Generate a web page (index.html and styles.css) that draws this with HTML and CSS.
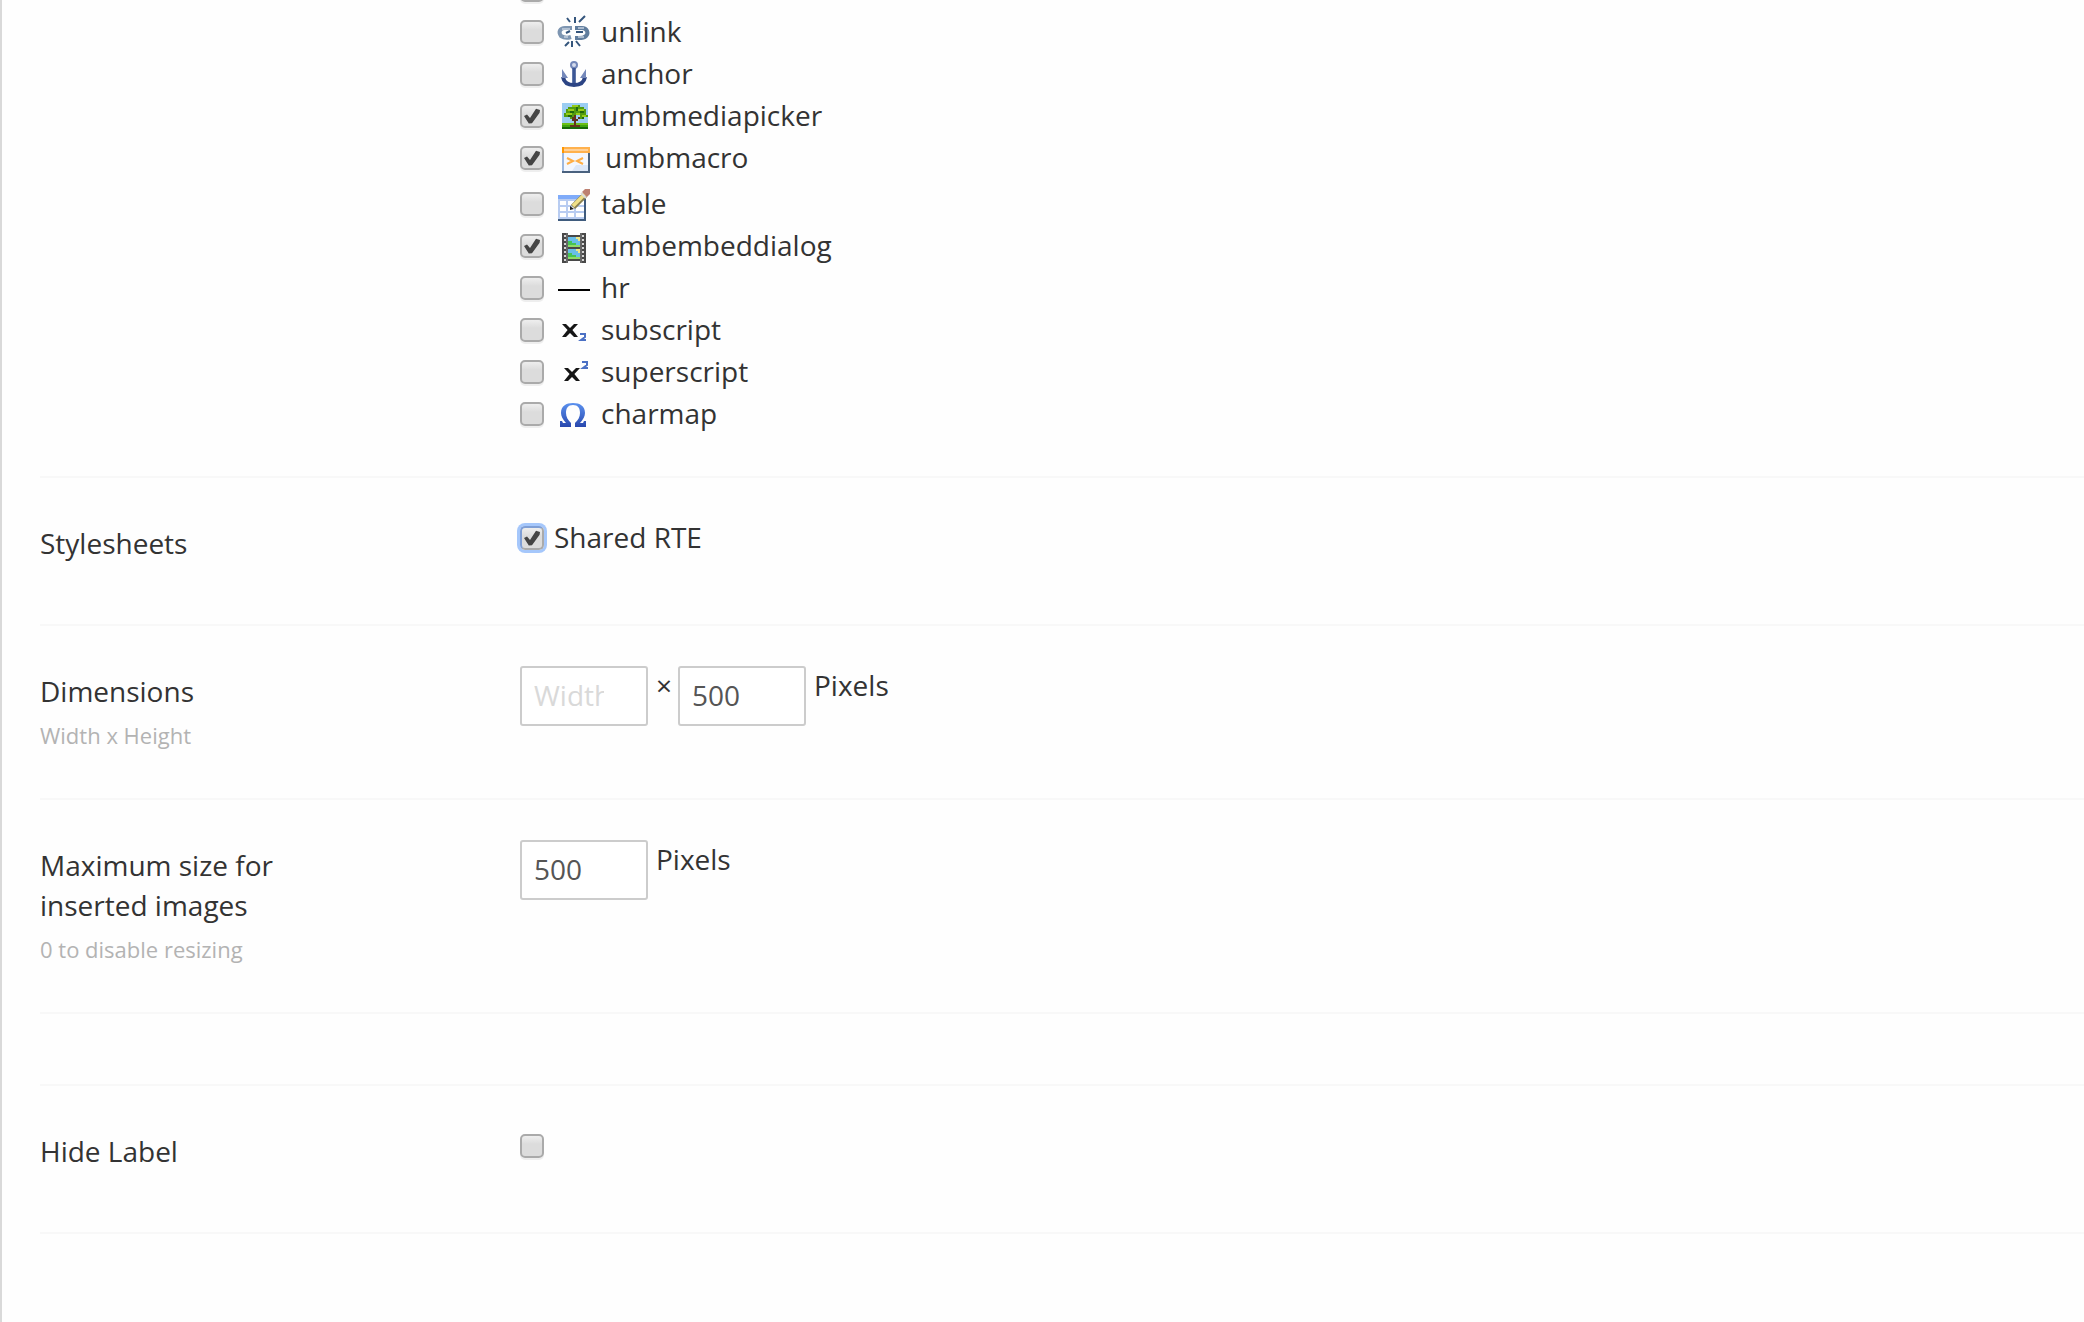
FILE: index.html
```html
<!DOCTYPE html>
<html lang="en">
<head>
<meta charset="utf-8">
<meta name="viewport" content="width=device-width, initial-scale=1">
<title>Rich text editor settings</title>
<link rel="stylesheet" href="styles.css">
</head>
<body>
<main class="panel">
<form>
  <section class="group toolbar-group">
    <div class="label-col"></div>
    <ul class="commands">
      <li><input type="checkbox" id="c-link" aria-label="link"></li>
      <li><input type="checkbox" id="c-unlink"><label for="c-unlink">
        <svg class="icon" viewBox="0 0 16 16" fill="none">
          <path d="M4.500 1.500l1.500 2M8.500 1v3M13.500.5L10.500 3.500M3.500 15.500l2-2M7 13v3M9 13l2 2.500" stroke="#34557c"/>
          <path d="M7 6.500H3.500C1 6.500 0 8.500 1.500 10.500 3 11.500 5 11.500 6.500 11" stroke="#7d95b1" stroke-width="2"/>
          <path d="M8.500 6.500H12c2.500 0 3.500 2.500 2 4-1.500 1.500-3.500 1-5.500 1" stroke="#607d9d" stroke-width="2"/>
          <path d="M2 7h4M10 6.500h3M3 11h2M10 11h3" stroke="#c3d0de" stroke-width=".8"/>
          <path d="M4 9l2-1M9 8.500h3.500" stroke="#34557c"/>
        </svg>unlink</label></li>
      <li><input type="checkbox" id="c-anchor"><label for="c-anchor">
        <svg class="icon" viewBox="0 0 16 16" fill="none">
          <circle cx="8" cy="4" r="1.500" stroke="#7387b8" fill="#d5dced"/>
          <path d="M8 5.500V14" stroke="#3c5795" stroke-width="1.800"/>
          <path d="M2.500 10C3 13 5 14 8 14s5-1 5.500-4" stroke="#2c4484" stroke-width="2"/>
          <path d="M2 6l3 4.500H2zM14 6l-3 4.500h3z" fill="#7488ba"/>
        </svg>anchor</label></li>
      <li><input type="checkbox" id="c-media" checked><label for="c-media">
        <svg class="icon" viewBox="0 0 16 16" shape-rendering="crispEdges">
          <path d="M2 2h13v10H2z" fill="#9bcdf2"/>
          <path d="M2 12h13v3H2z" fill="#3fa510"/><path d="M2 12h13v1H2zM3 14h11v0H3z" fill="#6cc018"/><path d="M2 14h13v1H2z" fill="#176a09"/>
          <path d="M5 4h2V3h4v1h2v1h1v3h1v1h-2v1h-2V8H9v1H8v1H6V9H3V7h1V5h1z" fill="#519c10"/>
          <path d="M7 3h3v1H7zM5 5h3v1H5zM10 5h3v1h-3zM4 7h3v1H4zM9 7h2v1H9zM12 8h2v1h-2z" fill="#97cd19"/>
          <path d="M9 4h1v2H9zM6 6h2v1H6zM11 6h2v1h-2zM5 8h2v1H5zM12 9h1v1h-1z" fill="#20680d"/>
          <path d="M7 9h1v1H7zM8 8h1v2h1V9h1v1h-1v1H9v2h2v1H6v-1h2v-2H7v-1h1z" fill="#65331b"/>
        </svg>umbmediapicker</label></li>
      <li class="tall"><input type="checkbox" id="c-macro" checked><label for="c-macro">
        <svg class="icon icon-wide" viewBox="0 0 18 16">
          <path d="M2 3h14v13H2z" fill="#49617e"/><path d="M2 6h1v9H2z" fill="#9db8df"/>
          <path d="M3 6h12v9H3z" fill="#f3f7ff"/><path d="M9 12h6v3H7z" fill="#dce7f8"/>
          <path d="M2 3h14v3H2z" fill="#ffb14d"/><path d="M3 4h12v1H3z" fill="#ffd097"/><path d="M2 3h1v3H2z" fill="#ff9700"/>
          <path d="M4.500 8.500L7.500 10l-3 1.500M12.500 8.500L9.500 10l3 1.500" fill="none" stroke="#ffad43"/>
        </svg>umbmacro</label></li>
      <li><input type="checkbox" id="c-table"><label for="c-table">
        <svg class="icon" viewBox="0 0 16 16">
          <path d="M0 4h14v13H0z" fill="#3f5b7d"/><path d="M0 4h13v12H0z" fill="#b8ccf1"/>
          <path d="M0 4h13v2H0z" fill="#7fabf9"/>
          <path d="M1 7h3v2H1zM5 7h3v2H5zM9 7h4v2H9zM1 10h3v2H1zM5 10h3v2H5zM9 10h4v2H9zM1 13h3v2H1zM5 13h3v2H5zM9 13h4v2H9z" fill="#fff"/>
          <path d="M7.500 10L13.500 4" stroke="#8b8050" stroke-width="3"/>
          <path d="M7.500 9.500L13.500 3.500" stroke="#f0e088" stroke-width="1.800"/>
          <path d="M12 2.500l1.500-1.500H16v2.500L14.500 5z" fill="#bd8172"/><path d="M11.500 3l2.500 2.500" stroke="#ddd"/>
          <path d="M6 9.500l2 1.500-2 .5z" fill="#222"/>
        </svg>table</label></li>
      <li><input type="checkbox" id="c-embed" checked><label for="c-embed">
        <svg class="icon" viewBox="0 0 16 16" shape-rendering="crispEdges">
          <path d="M2 2h12v15H2z" fill="#484848"/><path d="M5 4h6v5H5zM5 10h6v5H5z" fill="#68bee9"/>
          <path d="M5 6h2v1h2v1h2v1H5zM5 12h2v1h2v1h2v1H5z" fill="#45c455"/><path d="M5 8h6v1H5zM5 14h6v1H5z" fill="#8fdc66"/>
          <path d="M9 4h2v2h-1V5H9zM9 10h2v2h-1v-1H9z" fill="#ede789"/>
          <path d="M3 3h1v1H3zM3 5h1v1H3zM3 7h1v1H3zM3 9h1v1H3zM3 11h1v1H3zM3 13h1v1H3zM3 15h1v1H3zM12 3h1v1h-1zM12 5h1v1h-1zM12 7h1v1h-1zM12 9h1v1h-1zM12 11h1v1h-1zM12 13h1v1h-1zM12 15h1v1h-1z" fill="#d5d5d5"/>
          <path d="M4 2h1v15H4zM11 2h1v15h-1z" fill="#666"/><path d="M5 2h6v1H5zM5 16h6v1H5z" fill="#fefefe"/>
        </svg>umbembeddialog</label></li>
      <li><input type="checkbox" id="c-hr"><label for="c-hr">
        <svg class="icon" viewBox="0 0 16 16"><path d="M0 9h16v1H0z"/></svg>hr</label></li>
      <li><input type="checkbox" id="c-sub"><label for="c-sub">
        <svg class="icon" viewBox="0 0 16 16">
          <path d="M2 5.500h2L6 7.500l2-2h2L7.200 8.500 10 12H8L6 10l-2 2H2l2.800-3.500z" fill="#161616"/>
          <path d="M11 10.500h2.500V12l-2 1.500H14" fill="none" stroke="#4b70c4"/>
        </svg>subscript</label></li>
      <li><input type="checkbox" id="c-sup"><label for="c-sup">
        <svg class="icon" viewBox="0 0 16 16">
          <path d="M3 6.500h2L7 8.500l2-2h2L8.200 9.500 11 13H9l-2-2-2 2H3l2.800-3.500z" fill="#161616"/>
          <path d="M12 3.500h2.500V5l-2 1.500H15" fill="none" stroke="#4b70c4"/>
        </svg>superscript</label></li>
      <li><input type="checkbox" id="c-char"><label for="c-char">
        <svg class="icon" viewBox="0 0 16 16">
          <defs><linearGradient id="omega" x1="0" y1="0" x2="0" y2="1"><stop stop-color="#5b91ef"/><stop offset="1" stop-color="#2948ae"/></linearGradient></defs>
          <path d="M1 12h1l.5 1H4C2.500 11.500 1.500 9.500 1.500 8 1.500 4.500 4 3 7.500 3s6 1.500 6 5c0 1.500-1 3.500-2.500 5h1.500l.5-1h1v3H8.500v-2c1.500-1.500 2.500-3 2.500-5 0-2.500-1-4-3.500-4S4 5.500 4 8c0 2 1 3.500 2.500 5v2H1z" fill="url(#omega)"/>
        </svg>charmap</label></li>
    </ul>
  </section>

  <section class="group">
    <div class="label-col"><h2 class="label">Stylesheets</h2></div>
    <div class="controls">
      <span class="check"><input type="checkbox" id="shared" class="focused" checked><label for="shared">Shared RTE</label></span>
    </div>
  </section>

  <section class="group">
    <div class="label-col"><h2 class="label">Dimensions</h2><p class="hint">Width x Height</p></div>
    <div class="controls">
      <input class="size" type="text" placeholder="Width" aria-label="Width">
      <span class="times">×</span>
      <input class="size" type="text" value="500" aria-label="Height">
      <span>Pixels</span>
    </div>
  </section>

  <section class="group">
    <div class="label-col"><label class="label" for="max">Maximum size for inserted images</label><p class="hint">0 to disable resizing</p></div>
    <div class="controls">
      <input class="size" type="text" value="500" id="max">
      <span>Pixels</span>
    </div>
  </section>

  <div class="spacer"></div>

  <section class="group">
    <div class="label-col"><label class="label" for="hide">Hide Label</label></div>
    <div class="controls"><span class="check"><input type="checkbox" id="hide"></span></div>
  </section>
</form>
</main>
</body>
</html>
```
FILE: styles.css
```css
* { box-sizing: border-box; }

body {
  margin: 0;
  background: #fefefe;
  color: #333;
  font: 28px/40px "Open Sans", sans-serif;
}

.panel {
  min-height: 100vh;
  padding-left: 38px;
  border-left: 2px solid #d9d9d9;
  overflow: hidden;
}

.group {
  display: flex;
  padding-top: 40px;
  border-bottom: 2px solid #f8f8f8;
}

.label-col {
  flex: 0 0 480px;
  padding: 5px 220px 49px 0;
}

.label {
  display: block;
  margin: 0 0 12px;
  font-size: 28px;
  font-weight: 400;
}

.hint {
  margin: 0 0 2px;
  color: #b3b3b3;
  font-size: 22px;
  line-height: 24px;
  white-space: nowrap;
}

.controls {
  display: flex;
  align-items: flex-start;
  gap: 8px;
  line-height: 38px;
}

.times { margin-right: -2px; }

.check {
  display: flex;
  align-items: center;
  gap: 10px;
  height: 40px;
}

.check label { padding-bottom: 2px; }

/* Toolbar commands */
.toolbar-group {
  margin-top: -32px;
  padding: 0 0 42px;
}

.toolbar-group .label-col { padding: 0; }

.commands {
  margin: 0;
  padding: 0;
  list-style: none;
  line-height: 42px;
}

.commands li {
  display: flex;
  align-items: center;
  gap: 14px;
  height: 42px;
}

.commands .tall {
  height: 46px;
  padding-bottom: 4px;
}

.commands label {
  display: flex;
  align-items: center;
  gap: 11px;
}

.commands input[type="checkbox"] { margin-top: 2px; }

.icon {
  width: 32px;
  height: 32px;
  overflow: visible;
}

.icon-wide { width: 36px; }

/* Form controls */
input[type="checkbox"] {
  appearance: none;
  width: 24px;
  height: 24px;
  margin: 0;
  border: 2px solid #aaa;
  border-radius: 5px;
  background: linear-gradient(#eee, #dcdcdc 40%);
  box-shadow: 0 2px 0 #eee;
}

input[type="checkbox"]:checked::before {
  content: "";
  display: block;
  width: 20px;
  height: 20px;
  background: #444;
  clip-path: polygon(10% 50%, 25% 42%, 40% 60%, 70% 14%, 90% 20%, 88% 34%, 50% 86%, 34% 88%);
}

input[type="checkbox"].focused {
  border-color: #7f9fd6 #aaa #aaa #7f9fd6;
  box-shadow: 0 0 0 3px #a5c7fb;
}

.size {
  width: 128px;
  height: 60px;
  padding: 0 42px 2px 12px;
  border: 2px solid #ccc;
  border-radius: 3px;
  background: #fff;
  color: #555;
  font: inherit;
}

.size::placeholder { color: #d9d9d9; opacity: 1; }

.spacer {
  height: 72px;
  border-bottom: 2px solid #f8f8f8;
}
```
